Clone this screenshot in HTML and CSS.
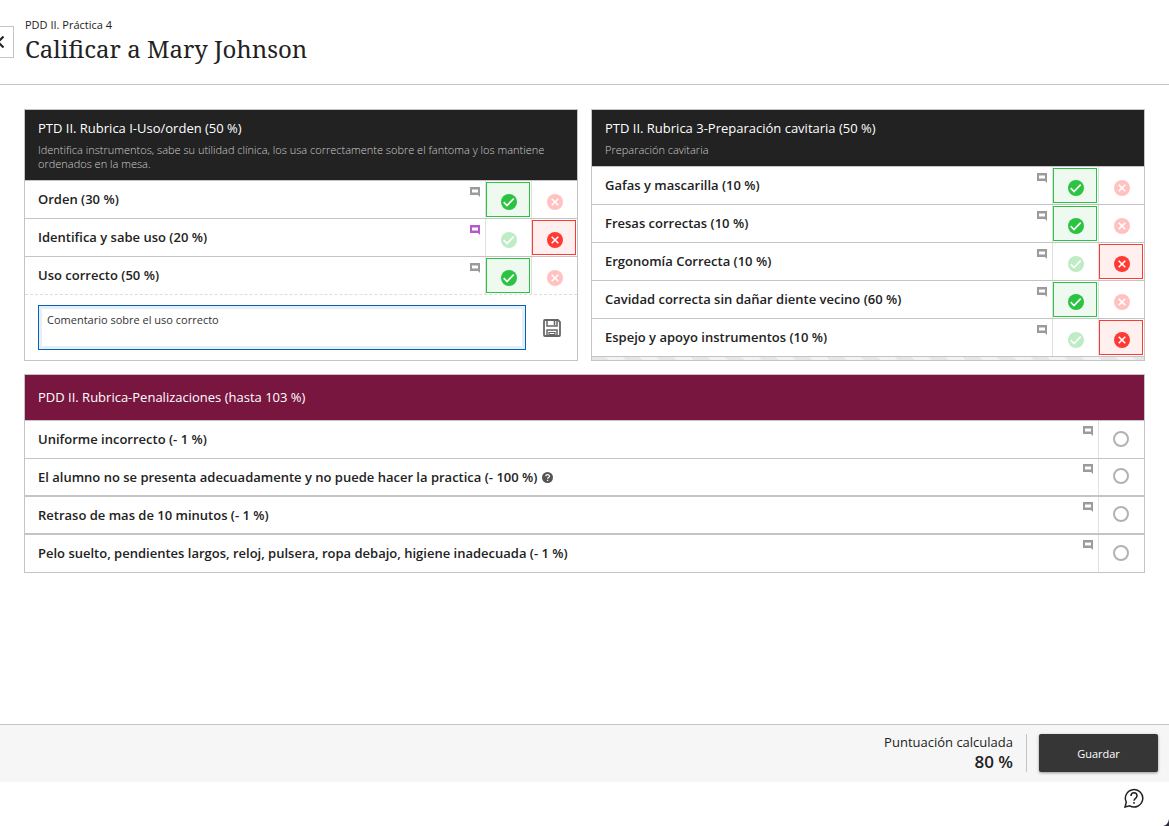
FILE: index.html
```html
<!DOCTYPE html>
<html lang="es">
<head>
<meta charset="utf-8">
<meta name="viewport" content="width=device-width, initial-scale=1">
<title>Calificar a Mary Johnson</title>
<link rel="stylesheet" href="styles.css">
</head>
<body>
<svg class="sprite" aria-hidden="true">
  <symbol id="i-note" viewBox="0 0 10 10"><path d="M0 0h10v10L8 8H0z" fill="currentColor"/><path d="M2 2h6v4H2z" fill="#fff"/><path d="M2 2.500h6M2 5.500h6" stroke="currentColor" stroke-width="1" opacity=".5"/></symbol>
  <symbol id="i-yes" viewBox="0 0 16 16"><circle cx="8" cy="8" r="8" fill="#2ac441"/><path d="M2.700 8.200l3.300 3.300 6.700-6.800" fill="none" stroke="#fff" stroke-width="1.700"/></symbol>
  <symbol id="i-no" viewBox="0 0 16 16"><circle cx="8" cy="8" r="8" fill="#ff3a34"/><path d="M4.700 4.700l6.600 6.600m0-6.600l-6.600 6.600" fill="none" stroke="#fff" stroke-width="1.600"/></symbol>
</svg>

<header class="top">
  <button class="back" type="button" aria-label="Volver"><svg width="8" height="14" viewBox="0 0 8 14"><path d="M7.500 1.500L2 7l5.500 5.500" fill="none" stroke="#222" stroke-width="2"/></svg></button>
  <div class="titles">
    <p class="crumb">PDD II. Práctica 4</p>
    <h1 class="title">Calificar a Mary Johnson</h1>
  </div>
</header>

<main class="main">
  <section class="card">
    <header class="card-head">
      <h2 class="card-title">PTD II. Rubrica I-Uso/orden (50 %)</h2>
      <p class="card-desc">Identifica instrumentos, sabe su utilidad clínica, los usa correctamente sobre el fantoma y los mantiene ordenados en la mesa.</p>
    </header>
    <div class="row">
      <span class="name">Orden (30 %)</span>
      <button class="note" type="button" aria-label="Comentario"><svg><use href="#i-note"/></svg></button>
      <div class="cell"><button class="mark yes on" type="button" aria-label="Correcto" aria-pressed="true"><svg><use href="#i-yes"/></svg></button></div>
      <div class="cell"><button class="mark no" type="button" aria-label="Incorrecto" aria-pressed="false"><svg><use href="#i-no"/></svg></button></div>
    </div>
    <div class="row">
      <span class="name">Identifica y sabe uso (20 %)</span>
      <button class="note filled" type="button" aria-label="Comentario"><svg><use href="#i-note"/></svg></button>
      <div class="cell"><button class="mark yes" type="button" aria-label="Correcto" aria-pressed="false"><svg><use href="#i-yes"/></svg></button></div>
      <div class="cell"><button class="mark no on" type="button" aria-label="Incorrecto" aria-pressed="true"><svg><use href="#i-no"/></svg></button></div>
    </div>
    <div class="row">
      <span class="name">Uso correcto (50 %)</span>
      <button class="note" type="button" aria-label="Comentario"><svg><use href="#i-note"/></svg></button>
      <div class="cell"><button class="mark yes on" type="button" aria-label="Correcto" aria-pressed="true"><svg><use href="#i-yes"/></svg></button></div>
      <div class="cell"><button class="mark no" type="button" aria-label="Incorrecto" aria-pressed="false"><svg><use href="#i-no"/></svg></button></div>
    </div>
    <form class="comment">
      <textarea class="comment-box" aria-label="Comentario">Comentario sobre el uso correcto</textarea>
      <button class="save" type="button" aria-label="Guardar comentario"><svg width="18" height="18" viewBox="0 0 18 18" fill="none" stroke="#666"><path d="M1 2a1 1 0 0 1 1-1h13l2 2v13a1 1 0 0 1-1 1H2a1 1 0 0 1-1-1z" stroke-width="1.800"/><path d="M4 1v6h10V1M11.500 2v4M4 17v-6h10v6" stroke-width="1.500"/><path d="M6 17v-3.500h6V17M6 15.500h6" stroke-width="1.200"/></svg></button>
    </form>
  </section>

  <section class="card">
    <header class="card-head">
      <h2 class="card-title">PTD II. Rubrica 3-Preparación cavitaria (50 %)</h2>
      <p class="card-desc">Preparación cavitaria</p>
    </header>
    <div class="row">
      <span class="name">Gafas y mascarilla (10 %)</span>
      <button class="note" type="button" aria-label="Comentario"><svg><use href="#i-note"/></svg></button>
      <div class="cell"><button class="mark yes on" type="button" aria-label="Correcto" aria-pressed="true"><svg><use href="#i-yes"/></svg></button></div>
      <div class="cell"><button class="mark no" type="button" aria-label="Incorrecto" aria-pressed="false"><svg><use href="#i-no"/></svg></button></div>
    </div>
    <div class="row">
      <span class="name">Fresas correctas (10 %)</span>
      <button class="note" type="button" aria-label="Comentario"><svg><use href="#i-note"/></svg></button>
      <div class="cell"><button class="mark yes on" type="button" aria-label="Correcto" aria-pressed="true"><svg><use href="#i-yes"/></svg></button></div>
      <div class="cell"><button class="mark no" type="button" aria-label="Incorrecto" aria-pressed="false"><svg><use href="#i-no"/></svg></button></div>
    </div>
    <div class="row">
      <span class="name">Ergonomía Correcta (10 %)</span>
      <button class="note" type="button" aria-label="Comentario"><svg><use href="#i-note"/></svg></button>
      <div class="cell"><button class="mark yes" type="button" aria-label="Correcto" aria-pressed="false"><svg><use href="#i-yes"/></svg></button></div>
      <div class="cell"><button class="mark no on" type="button" aria-label="Incorrecto" aria-pressed="true"><svg><use href="#i-no"/></svg></button></div>
    </div>
    <div class="row">
      <span class="name">Cavidad correcta sin dañar diente vecino (60 %)</span>
      <button class="note" type="button" aria-label="Comentario"><svg><use href="#i-note"/></svg></button>
      <div class="cell"><button class="mark yes on" type="button" aria-label="Correcto" aria-pressed="true"><svg><use href="#i-yes"/></svg></button></div>
      <div class="cell"><button class="mark no" type="button" aria-label="Incorrecto" aria-pressed="false"><svg><use href="#i-no"/></svg></button></div>
    </div>
    <div class="row">
      <span class="name">Espejo y apoyo instrumentos (10 %)</span>
      <button class="note" type="button" aria-label="Comentario"><svg><use href="#i-note"/></svg></button>
      <div class="cell"><button class="mark yes" type="button" aria-label="Correcto" aria-pressed="false"><svg><use href="#i-yes"/></svg></button></div>
      <div class="cell"><button class="mark no on" type="button" aria-label="Incorrecto" aria-pressed="true"><svg><use href="#i-no"/></svg></button></div>
    </div>
    <div class="filler"></div>
  </section>

  <section class="card wide">
    <header class="card-head penalty">
      <h2 class="card-title">PDD II. Rubrica-Penalizaciones (hasta 103 %)</h2>
    </header>
    <div class="row">
      <label class="name" for="p1">Uniforme incorrecto (- 1 %)</label>
      <button class="note" type="button" aria-label="Comentario"><svg><use href="#i-note"/></svg></button>
      <div class="cell"><input class="pick" type="checkbox" id="p1"></div>
    </div>
    <div class="row thin">
      <div class="name"><label for="p2">El alumno no se presenta adecuadamente y no puede hacer la practica (- 100 %)</label><button class="info" type="button" aria-label="Ayuda"><svg width="11" height="11" viewBox="0 0 11 11"><circle cx="5.500" cy="5.500" r="5.500" fill="#555"/><path d="M3.700 4.300c0-2.300 3.700-2.300 3.700-.1 0 1.300-1.800 1.300-1.800 2.500M5.600 7.700v1.300" fill="none" stroke="#fff" stroke-width="1.200"/></svg></button></div>
      <button class="note" type="button" aria-label="Comentario"><svg><use href="#i-note"/></svg></button>
      <div class="cell"><input class="pick" type="checkbox" id="p2"></div>
    </div>
    <div class="row thick">
      <label class="name" for="p3">Retraso de mas de 10 minutos (- 1 %)</label>
      <button class="note" type="button" aria-label="Comentario"><svg><use href="#i-note"/></svg></button>
      <div class="cell"><input class="pick" type="checkbox" id="p3"></div>
    </div>
    <div class="row thick">
      <label class="name" for="p4">Pelo suelto, pendientes largos, reloj, pulsera, ropa debajo, higiene inadecuada (- 1 %)</label>
      <button class="note" type="button" aria-label="Comentario"><svg><use href="#i-note"/></svg></button>
      <div class="cell"><input class="pick" type="checkbox" id="p4"></div>
    </div>
  </section>
</main>

<footer class="bar">
  <div class="score">
    <span class="score-label">Puntuación calculada</span>
    <strong class="score-value">80 %</strong>
  </div>
  <button class="submit" type="button">Guardar</button>
</footer>
<div class="help-strip">
  <button class="help" type="button" aria-label="Ayuda"><svg width="20" height="20" viewBox="0 0 20 20" fill="none" stroke="#222" stroke-width="1.500"><path d="M1 19l1.300-4.800A8.700 8.700 0 1 1 5.700 17.800L1 19z"/><path d="M7 8c0-4.200 6-4.200 6 0 0 2.400-3 2.200-3 4.700M10 14v1.700"/></svg></button>
</div>
<svg class="corner" width="6" height="7" viewBox="0 0 6 7" aria-hidden="true"><path d="M0 7Q5 6 6 0V7z" fill="#2b2b3a"/></svg>
</body>
</html>
```
FILE: styles.css
```css
*, *::before, *::after { box-sizing: border-box; }
body {
  margin: 0;
  min-height: 100vh;
  display: flex;
  flex-direction: column;
  background: #fff;
  color: #222;
  font: 13px/18px "Open Sans", "Noto Sans", sans-serif;
}
h1, h2, p { margin: 0; font-weight: 400; }
button { padding: 0; border: 0; background: none; font: inherit; color: inherit; cursor: pointer; }
svg { display: block; }
.sprite { position: absolute; width: 0; height: 0; }

.top {
  display: flex;
  align-items: flex-start;
  gap: 11px;
  padding: 16px 24px 20px 0;
  border-bottom: 1px solid #c4c4c4;
}
.back {
  width: 14px;
  height: 32px;
  margin-top: 10px;
  padding-right: 9px;
  display: flex;
  align-items: center;
  justify-content: flex-end;
  border: 1px solid #c4c4c4;
  border-left: 0;
}
.back svg { flex: none; }
.crumb { font-size: 11px; }
.title { font: 24px/30px "Noto Serif", "Droid Serif", "DejaVu Serif", serif; }

.main {
  flex: 1;
  display: grid;
  grid-template-columns: 1fr 1fr;
  align-content: start;
  gap: 13px;
  padding: 24px;
}
.card {
  display: flex;
  flex-direction: column;
  min-width: 0;
  border: 1px solid #c4c4c4;
}
.wide { grid-column: 1 / -1; }
.card-head {
  padding: 8px 13px 9px;
  background: #222;
  color: #fff;
}
.card-title { font-size: 13px; line-height: 20px; }
.card-desc {
  margin-top: 5px;
  font-size: 11px;
  line-height: 14px;
  font-weight: 300;
  color: #cdcdcd;
}
.penalty { padding: 12px 13px 13px; background: #781640; }

.row {
  display: flex;
  min-height: 38px;
  border-top: 1px solid #c4c4c4;
}
.row:last-child { min-height: 39px; }
.thin { min-height: 37px; }
.thick { border-top-width: 2px; }
.name {
  flex: 1;
  display: flex;
  align-items: center;
  gap: 5px;
  padding: 0 0 2px 13px;
  font-weight: 600;
}
.thick .name, .thin .name { padding-bottom: 0; }
.row:last-child .name { padding-bottom: 2px; }
.note {
  align-self: flex-start;
  margin: 6px 5px 0 0;
  color: #9b9b9b;
}
.wide .note { margin-top: 5px; }
.note svg { width: 10px; height: 10px; }
.filled { color: #b658c9; }
.cell {
  width: 46px;
  display: flex;
  align-items: center;
  border-left: 1px solid #e0e0e0;
}
.wide .cell { padding-bottom: 2px; }
.mark {
  width: 44px;
  height: 35px;
  display: flex;
  align-items: center;
  justify-content: center;
  padding: 4px 0 0 2px;
  border: 1px solid transparent;
}
.mark svg { width: 16px; height: 16px; opacity: .3; }
.on svg { opacity: 1; }
.yes.on { border-color: #2ac441; background: #eef9f0; }
.no.on { border-color: #ff3a34; background: #ffefef; }

.comment {
  flex: 1;
  display: flex;
  align-items: center;
  padding: 0 16px 0 13px;
  min-height: 66px;
  border-top: 1px dashed #ddd;
}
.comment-box {
  flex: 1;
  height: 45px;
  padding: 6px 8px;
  border: 1px solid #0761b5;
  outline: 0;
  box-shadow: inset 0 0 0 3px #e6eff8;
  resize: none;
  color: #333;
  font: 11px/16px "Open Sans", "Noto Sans", sans-serif;
}
.save { margin-left: 17px; }
.filler {
  flex: 1;
  border-top: 1px solid #c4c4c4;
  background: repeating-linear-gradient(45deg, #e6e6e6 0 12px, #f3f3f3 12px 24px);
}
.info { display: flex; }
.pick {
  appearance: none;
  width: 16px;
  height: 16px;
  margin: 0 14px;
  border: 2px solid #b2b2b2;
  border-radius: 50%;
  background: #fff;
}

.bar {
  display: flex;
  align-items: center;
  justify-content: flex-end;
  gap: 12px;
  min-height: 58px;
  padding: 0 11px 2px;
  border-top: 1px solid #c4c4c4;
  background: #f6f6f6;
}
.score {
  display: flex;
  flex-direction: column;
  align-items: flex-end;
  padding-right: 13px;
  border-right: 1px solid #c4c4c4;
}
.score-label { line-height: 17px; }
.score-value { font-size: 17px; line-height: 21px; font-weight: 600; }
.submit {
  width: 119px;
  height: 38px;
  padding-top: 2px;
  border-radius: 2px;
  background: #363636;
  color: #fff;
  font-size: 11px;
  box-shadow: 0 1px 3px rgba(0, 0, 0, .4);
}
.help-strip {
  display: flex;
  align-items: center;
  justify-content: flex-end;
  height: 44px;
  padding: 0 25px 12px 0;
}
.corner { position: fixed; right: 0; bottom: 0; }
```
